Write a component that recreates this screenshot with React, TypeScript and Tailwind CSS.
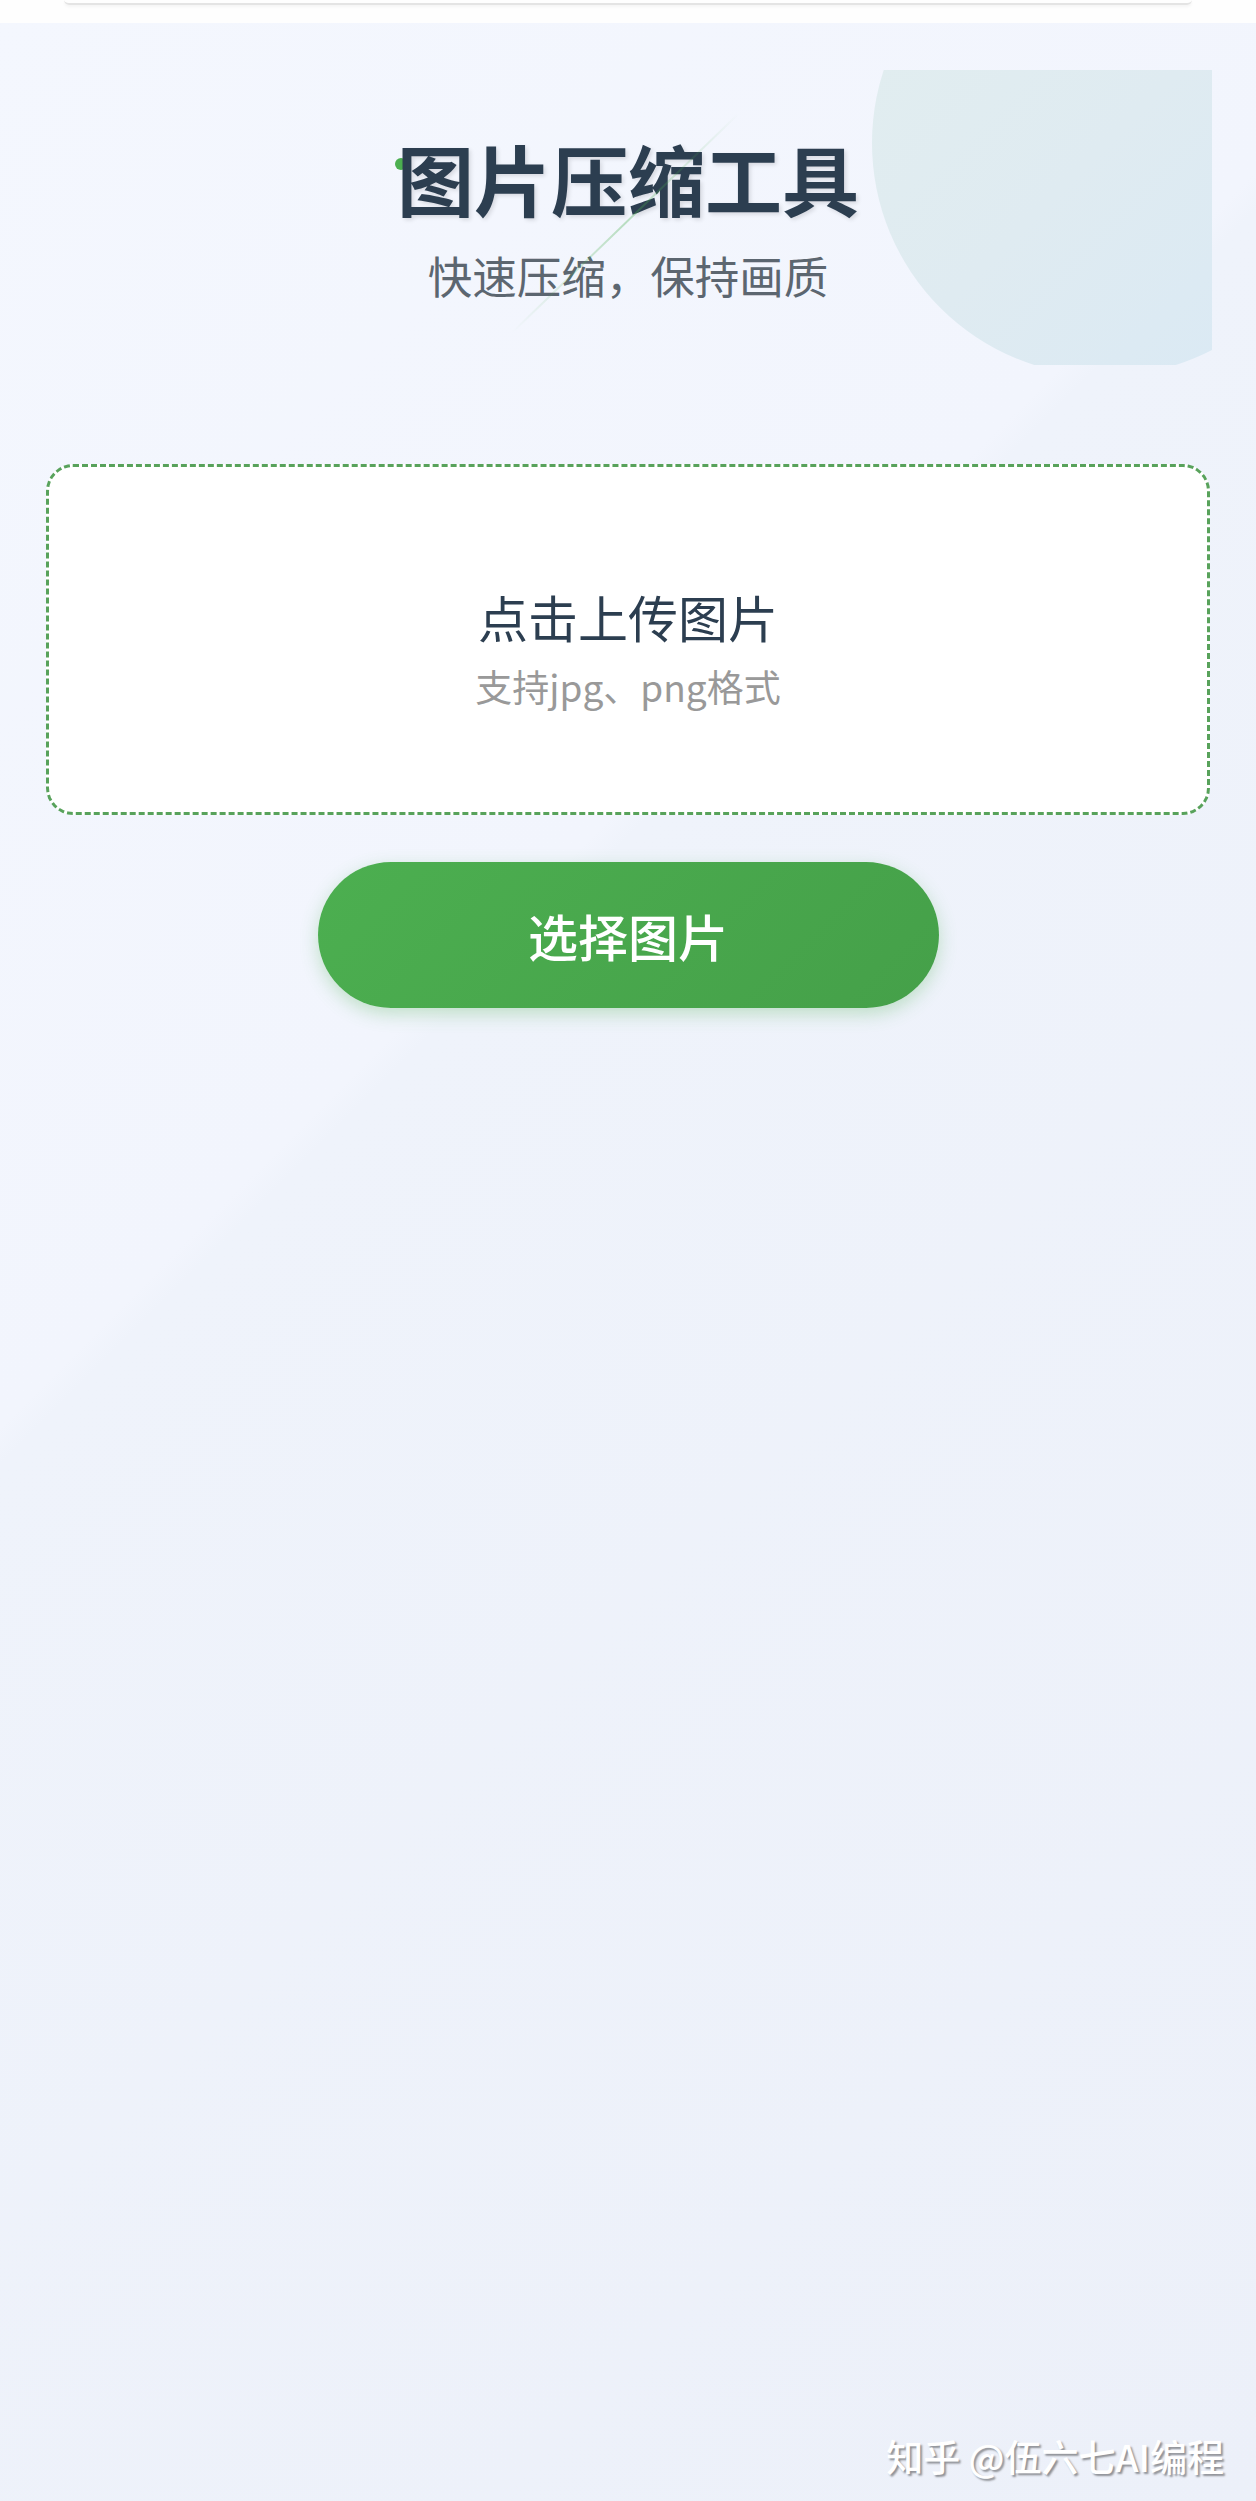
import React from 'react'

const cjk = "font-['Noto_Sans_CJK_SC','Noto_Sans',sans-serif]"

const Header = () => {
    return (
        <div className="relative mx-[44px] mt-[47px] h-[295px] overflow-hidden">
            {/* corner bubble */}
            <div className="absolute top-[-160px] right-[-126px] w-[466px] h-[466px] rounded-full bg-[linear-gradient(135deg,#e2eeef_0%,#dfebf1_50%,#d9e9f5_100%)]"></div>
            {/* thin diagonal streak */}
            <div className="absolute left-[424px] top-[152px] w-[315px] h-[2px] -rotate-[44deg] z-20 bg-[linear-gradient(90deg,transparent,rgba(76,175,80,0.35),transparent)]"></div>

            <div className="relative flex flex-col items-center pt-[69px]">
                <h1 className="relative inline-block">
                    <span className="absolute left-[-2px] top-[19px] w-[12px] h-[12px] rounded-full bg-[#4caf50]"></span>
                    <span className={`relative z-10 block text-[77px] leading-none font-bold text-[#2c3e50] [text-shadow:2px_2px_4px_rgba(0,0,0,0.12)] ${cjk}`}>
                        图片压缩工具
                    </span>
                </h1>
                <p className={`mt-[37px] text-[44.5px] leading-none text-[#5c6670] ${cjk}`}>
                    快速压缩，保持画质
                </p>
            </div>
        </div>
    )
}

const UploadBox = () => {
    return (
        <div className="mx-[46px] mt-[99px] h-[351px] rounded-[27px] border-[3px] border-dashed border-[#58a25b] bg-white flex flex-col items-center pt-[124px]">
            <p className={`text-[50px] leading-none font-normal text-[#2c3e50] ${cjk}`}>点击上传图片</p>
            <p className={`mt-[27px] text-[37px] leading-none text-[#999999] ${cjk}`}>支持jpg、png格式</p>
        </div>
    )
}

export default function App() {
    return (
        <div className="relative w-full min-h-[2501px] overflow-hidden bg-[linear-gradient(135deg,#f4f7fe_0%,#f2f5fd_38%,#eff3fb_39%,#ecf0f9_100%)]">
            <div className="h-[23px] bg-[#fefefe]">
                <div className="mx-[64px] h-[5px] rounded-b-[10px] border-b-2 border-[#e4e4e4] shadow-[0_2px_3px_rgba(0,0,0,0.04)]"></div>
            </div>

            <Header />
            <UploadBox />

            <div className="flex justify-center mt-[47px]">
                <button className={`w-[621px] h-[146px] rounded-full bg-[linear-gradient(135deg,#4caf50,#45a049)] text-white text-[50px] font-medium leading-none shadow-[0_6px_18px_rgba(76,175,80,0.3)] ${cjk}`}>
                    选择图片
                </button>
            </div>

            <div className={`absolute right-[32px] bottom-[26px] text-[37px] leading-none font-medium text-white [text-shadow:2px_2px_2px_rgba(0,0,0,0.4)] ${cjk}`}>
                知乎 @伍六七AI编程
            </div>
        </div>
    )
}
